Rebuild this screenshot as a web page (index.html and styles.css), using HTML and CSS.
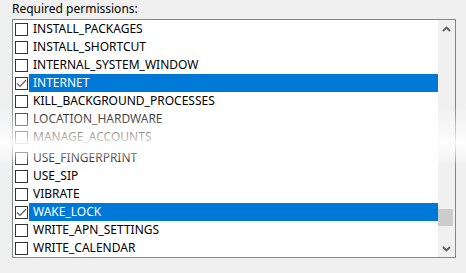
FILE: index.html
```html
<!DOCTYPE html>
<html lang="en">

<head>
  <link rel="stylesheet" href="styles.css">
</head>

<body>
  <div class="caption">Required permissions:</div>
  <div class="permBox">
    <ul class="permList">
      <li><span class="chk"></span><span class="name">INSTALL_PACKAGES</span></li>
      <li><span class="chk"></span><span class="name">INSTALL_SHORTCUT</span></li>
      <li><span class="chk"></span><span class="name">INTERNAL_SYSTEM_WINDOW</span></li>
      <li class="selected"><span class="chk"><svg width="11" height="11" viewBox="0 0 11 11"><polyline points="1,5.5 4,8.5 10,2" fill="none" stroke="#5f5f5f" stroke-width="1.2"/></svg></span><span class="name">INTERNET</span></li>
      <li><span class="chk"></span><span class="name">KILL_BACKGROUND_PROCESSES</span></li>
      <li><span class="chk"></span><span class="name">LOCATION_HARDWARE</span></li>
      <li><span class="chk"></span><span class="name">MANAGE_ACCOUNTS</span></li>
      <li class="tear"></li>
      <li><span class="chk"></span><span class="name">USE_FINGERPRINT</span></li>
      <li><span class="chk"></span><span class="name">USE_SIP</span></li>
      <li><span class="chk"></span><span class="name">VIBRATE</span></li>
      <li class="selected"><span class="chk"><svg width="11" height="11" viewBox="0 0 11 11"><polyline points="1,5.5 4,8.5 10,2" fill="none" stroke="#5f5f5f" stroke-width="1.2"/></svg></span><span class="name">WAKE_LOCK</span></li>
      <li><span class="chk"></span><span class="name">WRITE_APN_SETTINGS</span></li>
      <li><span class="chk"></span><span class="name">WRITE_CALENDAR</span></li>
    </ul>
    <div class="scrollBar">
      <div class="arrow"><svg width="9" height="6" viewBox="0 0 9 6"><polyline points="1,5 4.5,1.5 8,5" fill="none" stroke="#606060" stroke-width="1.8"/></svg></div>
      <div class="track"><div class="thumb"></div></div>
      <div class="arrow"><svg width="9" height="6" viewBox="0 0 9 6"><polyline points="1,1 4.5,4.5 8,1" fill="none" stroke="#606060" stroke-width="1.8"/></svg></div>
    </div>
  </div>
  <div class="fade"></div>
</body>

</html>
```

FILE: styles.css
```css
body {
  margin: 0;
  padding: 0;
  width: 466px;
  height: 273px;
  overflow: hidden;
  position: relative;
  font-family: "Noto Sans", "Open Sans", sans-serif;
  font-size: 12px;
  color: #000;
  background: #f0f0f0;
}

.caption {
  height: 19px;
  line-height: 17px;
  padding-left: 12px;
}

.permBox {
  display: flex;
  margin-left: 12px;
  width: 444px;
  height: 239px;
  box-sizing: border-box;
  border: 1px #828790 solid;
  background: #fff;
}

.permList {
  flex: 1;
  list-style-type: none;
  margin: 0;
  padding: 0;
  overflow: hidden;
}

.permList li {
  display: flex;
  align-items: center;
  height: 18px;
}

.permList li.tear {
  height: 3px;
}

.chk {
  display: flex;
  align-items: center;
  justify-content: center;
  width: 13px;
  height: 13px;
  box-sizing: border-box;
  margin-left: 2px;
  border: 1px #333 solid;
  background: #fff;
}

.name {
  flex: 1;
  height: 18px;
  line-height: 17px;
  margin-left: 1px;
  padding-left: 4px;
  white-space: nowrap;
}

.selected .name {
  background: #0078d7;
  color: #fff;
}

.scrollBar {
  display: flex;
  flex-direction: column;
  width: 17px;
  background: #f0f0f0;
}

.arrow {
  display: flex;
  align-items: center;
  justify-content: center;
  height: 17px;
}

.track {
  flex: 1;
  position: relative;
}

.thumb {
  position: absolute;
  left: 0;
  top: 172px;
  width: 15px;
  height: 17px;
  background: #cdcdcd;
}

/* soft tear between the two halves of the list */
.fade {
  position: absolute;
  left: 0;
  right: 0;
  top: 106px;
  height: 60px;
  background: linear-gradient(to bottom,
      rgba(255, 255, 255, 0) 0%,
      rgba(255, 255, 255, 0.3) 22%,
      rgba(255, 255, 255, 0.65) 50%,
      rgba(255, 255, 255, 0.9) 62%,
      rgba(255, 255, 255, 0.45) 82%,
      rgba(255, 255, 255, 0) 100%);
}
```
